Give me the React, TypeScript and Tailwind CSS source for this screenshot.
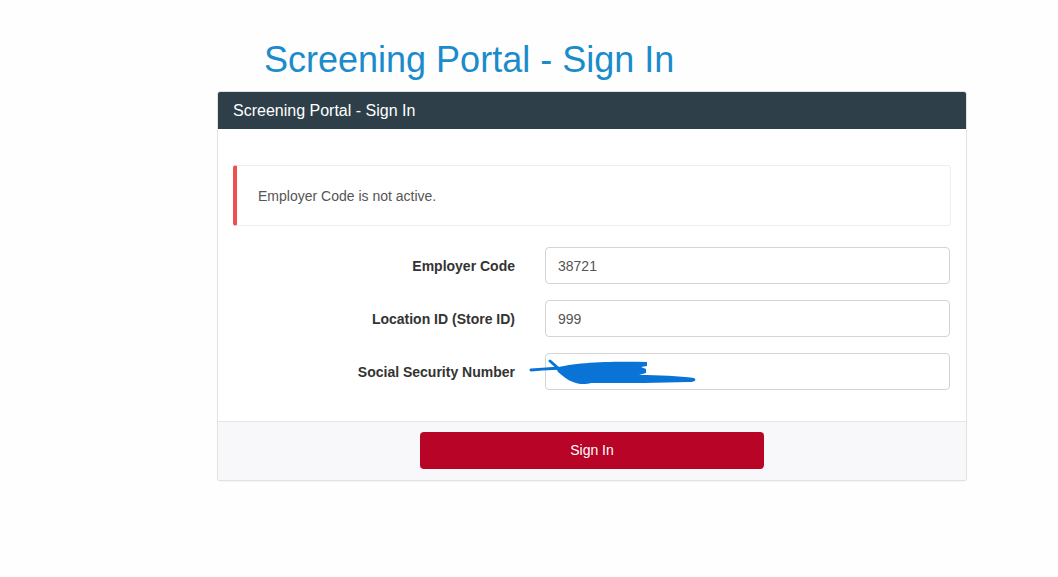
import React from "react";

function Scribble() {
  return (
    <svg
      className="absolute pointer-events-none"
      style={{ left: -16, top: 3 }}
      width="170"
      height="32"
      viewBox="0 0 170 32"
    >
      <g fill="none" stroke="#0a74d6" strokeLinecap="round" strokeLinejoin="round">
        <path d="M2 14 C 14 13, 26 12, 40 12" strokeWidth="3" />
        <path d="M21 5 L 30 13" strokeWidth="3" />
      </g>
      <path
        fill="#0a74d6"
        d="M27 12 C 45 6, 85 5, 118 6 L 118 10 L 112 11 L 117 13 L 117 17 L 110 19 C 130 19, 150 20, 165 22 C 168 24, 166 26, 160 26 C 130 27, 100 27, 62 27 C 56 29, 48 28, 44 26 C 38 24, 34 20, 29 16 Z"
      />
    </svg>
  );
}

function Row({ label, value, scribble }: { label: string; value: string; scribble?: boolean }) {
  return (
    <div className="flex items-center gap-[30px]">
      <label className="w-[282px] pt-px text-right text-[14px] font-bold text-[#333]">{label}</label>
      <div className="relative w-[405px]">
        <input
          readOnly
          value={value}
          className="w-full h-[37px] rounded-[4px] border border-[#d4d4d4] bg-white px-3 text-[14px] text-[#555] outline-none"
          style={{ fontFamily: '"Liberation Sans", Arial, sans-serif' }}
        />
        {scribble && <Scribble />}
      </div>
    </div>
  );
}

export default function App() {
  return (
    <div
      className="min-h-[577px] w-[1058px] bg-[#fefefe] pt-[38px]"
      style={{ fontFamily: '"Liberation Sans", Arial, sans-serif' }}
    >
      <h1 className="pl-[264px] text-[36px] leading-[44px] text-[#1a8bcb]">Screening Portal - Sign In</h1>
      <div className="ml-[217px] mt-[9px] w-[750px] rounded-[3px] border border-[#e2e2e2] bg-white shadow-[0_1px_1px_rgba(0,0,0,0.04)]">
        <div className="h-[37px] rounded-t-[2px] bg-[#2e3f4a] px-[15px] flex items-center text-[16px] text-white">
          Screening Portal - Sign In
        </div>
        <div className="px-[15px] pt-[36px] pb-[31px]">
          <div className="flex h-[61px] items-center rounded-[3px] border border-[#eeeeee] border-l-[4px] border-l-[#ef4f4f] pl-[21px] pt-px text-[14px] text-[#555]">
            Employer Code is not active.
          </div>
          <div className="mt-[21px] flex flex-col gap-[16px]">
            <Row label="Employer Code" value="38721" />
            <Row label="Location ID (Store ID)" value="999" />
            <Row label="Social Security Number" value="" scribble />
          </div>
        </div>
        <div className="flex justify-center border-t border-[#e6e6e6] bg-[#f8f8fa] pt-[10px] pb-[11px] rounded-b-[3px]">
          <button className="h-[37px] w-[344px] rounded-[4px] bg-[#b80426] text-[14px] text-white">
            Sign In
          </button>
        </div>
      </div>
    </div>
  );
}
